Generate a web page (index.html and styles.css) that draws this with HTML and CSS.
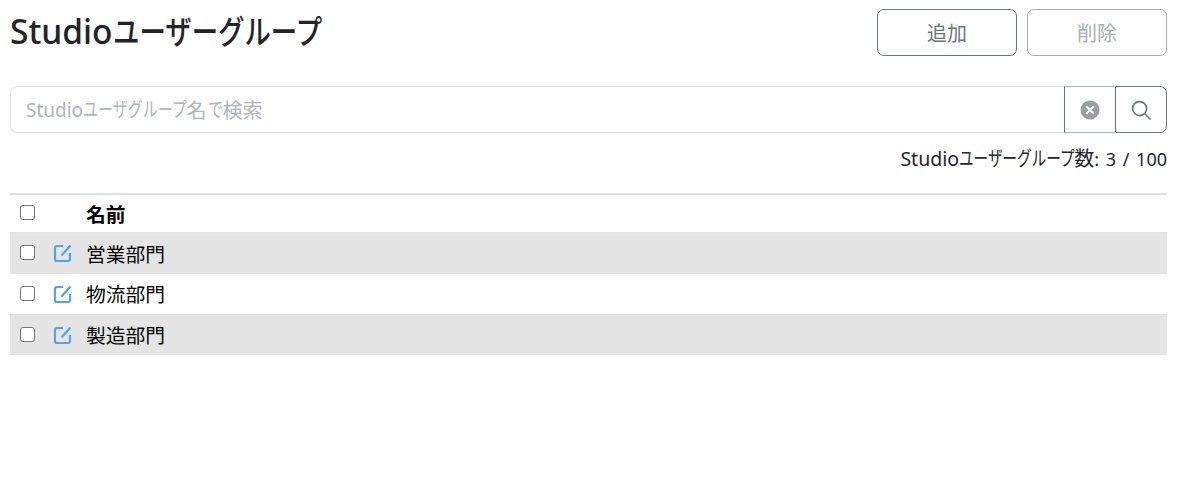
FILE: index.html
```html
<!DOCTYPE html>
<html lang="ja">
<head>
<meta charset="utf-8">
<title>Studioユーザーグループ</title>
<link rel="stylesheet" href="styles.css">
</head>
<body>
<main class="page">
  <header class="head">
    <h1 class="title">Studio<span class="kana kana-8">ユーザーグループ</span></h1>
    <div class="actions">
      <button class="btn" type="button">追加</button>
      <button class="btn btn-disabled" type="button" disabled>削除</button>
    </div>
  </header>
  <div class="search">
    <label class="search-field">
      <input class="search-input" type="text" aria-label="Studioユーザグループ名で検索">
      <span class="hint"><span class="latin">Studio</span><span class="kana kana-7">ユーザグループ</span>名<span class="kana kana-1">で</span>検索</span>
    </label>
    <button class="search-btn search-clear" type="button" aria-label="クリア">
      <svg width="20" height="20" viewBox="0 0 20 20"><circle cx="10" cy="10" r="9.5" fill="#9a9da2"/><path d="M6.700 6.700l6.600 6.600M13.300 6.700l-6.600 6.600" stroke="#fff" stroke-width="2" stroke-linecap="round"/></svg>
    </button>
    <button class="search-btn search-go" type="button" aria-label="検索">
      <svg width="20" height="20" viewBox="0 0 20 20" fill="none" stroke="#6c757d" stroke-width="1.600"><circle cx="8.600" cy="8.600" r="7"/><path d="M13.800 13.800l5.200 5.200" stroke-linecap="round"/></svg>
    </button>
  </div>
  <p class="count"><span class="latin">Studio</span><span class="kana kana-8">ユーザーグループ</span><span class="ja">数</span>: 3 / 100</p>
  <table class="table">
    <thead>
      <tr class="row row-head">
        <th class="c-check"><input class="check" type="checkbox"></th>
        <th class="c-edit"></th>
        <th class="c-name">名前</th>
      </tr>
    </thead>
    <tbody>
      <tr class="row row-a">
        <td class="c-check"><input class="check" type="checkbox"></td>
        <td class="c-edit"><svg class="edit" width="20" height="20" viewBox="0 0 20 20" fill="none" stroke="#55a2f0" stroke-width="2.200"><path d="M10 3H4a2 2 0 0 0-2 2v11a2 2 0 0 0 2 2h11a2 2 0 0 0 2-2V10"/><path d="M8.500 12.500l9-10"/></svg></td>
        <td class="c-name">営業部門</td>
      </tr>
      <tr class="row row-b">
        <td class="c-check"><input class="check" type="checkbox"></td>
        <td class="c-edit"><svg class="edit" width="20" height="20" viewBox="0 0 20 20" fill="none" stroke="#55a2f0" stroke-width="2.200"><path d="M10 3H4a2 2 0 0 0-2 2v11a2 2 0 0 0 2 2h11a2 2 0 0 0 2-2V10"/><path d="M8.500 12.500l9-10"/></svg></td>
        <td class="c-name">物流部門</td>
      </tr>
      <tr class="row row-c">
        <td class="c-check"><input class="check" type="checkbox"></td>
        <td class="c-edit"><svg class="edit" width="20" height="20" viewBox="0 0 20 20" fill="none" stroke="#55a2f0" stroke-width="2.200"><path d="M10 3H4a2 2 0 0 0-2 2v11a2 2 0 0 0 2 2h11a2 2 0 0 0 2-2V10"/><path d="M8.500 12.500l9-10"/></svg></td>
        <td class="c-name">製造部門</td>
      </tr>
    </tbody>
  </table>
</main>
</body>
</html>
```
FILE: styles.css
```css
* { box-sizing: border-box; }
html, body { margin: 0; background: #fff; }
body {
  font-family: "Noto Sans", "Noto Sans CJK JP", sans-serif;
  color: #212529;
  font-size: 18px;
}
.page { padding: 9px 12px 0 10px; }
.head { display: flex; justify-content: space-between; align-items: flex-start; height: 47px; }
.title { margin: 0; font-size: 33.500px; line-height: 44px; font-weight: 500; }
.kana { display: inline-block; line-height: 1; transform-origin: left center; }
.title .kana { font-size: 33px; transform: scaleX(.8); margin-right: -1.6em; }
.hint .kana { font-size: 20px; transform: scaleX(.75); }
.count .kana { font-size: 20px; transform: scaleX(.73); margin-right: -2.160em; }
.kana-8 { margin-right: -2em; }
.kana-7 { margin-right: -1.750em; }
.kana-1 { margin-right: -.25em; margin-left: 1px; }
.latin { font-size: 19.500px; }
.ja { font-size: 20px; line-height: 1; }
.actions { display: flex; gap: 10px; }
.btn {
  width: 140px; height: 47px;
  font: inherit; font-size: 20px; color: #6c757d;
  background: #fff;
  border: 1px solid #6c757d;
  border-radius: 7px;
}
.btn-disabled { color: #a9aeb3; border-color: #a9aeb3; }
.search { display: flex; height: 47px; margin-top: 30px; }
.search-field { flex: 1; min-width: 0; display: block; position: relative; }
.search-input {
  display: block; width: 100%; height: 100%;
  font: inherit; color: #212529;
  padding: 0 15px;
  border: 1px solid #dee2e6;
  border-right: 0;
  border-radius: 7px 0 0 7px;
  background: #fff;
}
.hint {
  position: absolute; left: 16px; top: 0; height: 100%;
  display: flex; align-items: center;
  font-size: 20px; color: #adb5bd; white-space: nowrap; pointer-events: none;
}
.hint .latin { font-size: 19px; }
.search-btn {
  display: flex; align-items: center; justify-content: center;
  padding: 0; background: #fff;
  border: 1px solid #6c757d;
}
.search-clear { width: 51px; border-right: 0; border-top-color: #adb5bd; border-bottom-color: #adb5bd; }
.search-go { width: 52px; border-radius: 0 7px 7px 0; }
.count { margin: 13px 0 0; height: 27px; text-align: right; font-size: 18px; line-height: 26px; word-spacing: 2px; }
.table { width: 100%; margin-top: 20px; border-collapse: collapse; border-top: 2px solid #dee2e6; color: #000; }
.row td, .row th { padding: 0; vertical-align: middle; text-align: left; }
.row-head { height: 38px; }
.row-a { height: 42px; }
.row-b { height: 40px; }
.row-c { height: 41px; }
.row-a, .row-c { background: #e5e5e5; }
.row-a { border-top: 1px solid #dee2e6; }
.row-c { border-top: 1px solid #dee2e6; }
.c-check { width: 36px; padding-left: 10px !important; }
.c-edit { width: 40px; }
.c-name { font-weight: 400; font-size: 19.800px; }
.row-head .c-name { font-weight: 700; }
.check {
  display: block; margin: -1px 0 0; width: 15px; height: 15px;
  appearance: none; background: #fff;
  border: 1px solid #767676; border-radius: 3px;
}
.edit { display: block; margin-left: 7px; }
```
